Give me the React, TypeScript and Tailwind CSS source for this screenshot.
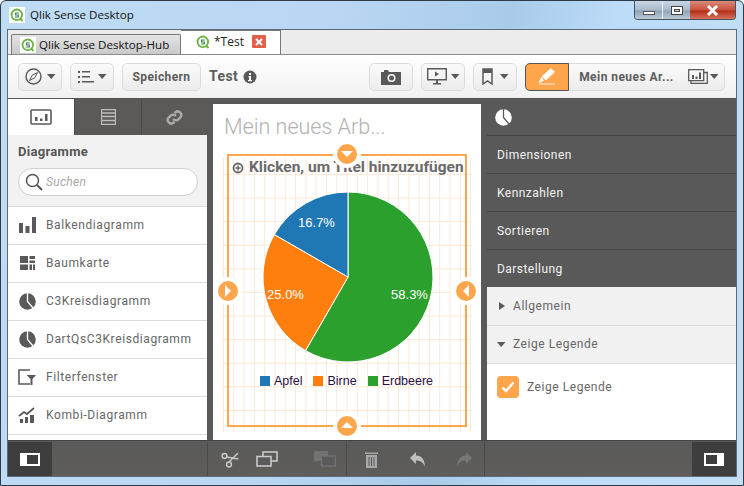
import React from "react";

const UI = "font-['Roboto','Liberation_Sans',sans-serif]";
const G = "#595959";

function Caret({ c = "#595959" }: { c?: string }) {
  return <svg width="9" height="5" viewBox="0 0 9 5"><path d="M0 0h8.5L4.2 5z" fill={c} /></svg>;
}

function QLogo({ box }: { box?: boolean }) {
  return (
    <span className={`flex h-[16px] w-[16px] items-center justify-center ${box ? "bg-white" : ""}`}>
      <svg width="14" height="14" viewBox="0 0 14 14">
        <circle cx="6.8" cy="6.8" r="5.3" fill="none" stroke="#6cb33f" strokeWidth="1.8" />
        <path d="M10 10.5l2.5 2.5" stroke="#6cb33f" strokeWidth="1.8" />
        <path d="M8.8 5H5.6v2h2.7v2H4.9" fill="none" stroke="#3c7a4a" strokeWidth="1.1" />
      </svg>
    </span>
  );
}

function ToolBtn({ w, children, className = "" }: { w: string; children: React.ReactNode; className?: string }) {
  return (
    <div className={`flex h-[28px] items-center justify-center rounded-[5px] border border-[#dcdcdc] bg-[linear-gradient(#fafafa,#ececec)] ${w} ${className}`}>
      {children}
    </div>
  );
}

function PieIcon({ c = "#595959", bg = "#fff" }: { c?: string; bg?: string }) {
  return (
    <svg width="17" height="17" viewBox="0 0 17 17">
      <circle cx="8.500" cy="8.500" r="8.300" fill={c} />
      <path d="M8.500 0v8.500l5.500 6.500" fill="none" stroke={bg} strokeWidth="1.300" />
    </svg>
  );
}

const rows: [string, React.ReactNode][] = [
  ["Balkendiagramm", <svg key="a" width="17" height="16" viewBox="0 0 17 16"><path d="M0 6h4v10H0zM6.500 9h4v7h-4zM13 0h4v16h-4z" fill={G} /></svg>],
  ["Baumkarte", <svg key="b" width="15" height="14" viewBox="0 0 15 14"><path d="M0 0h8v7H0zM9.500 0H15v3H9.500zM9.500 4.500H15V7H9.500zM0 8.500h8V14H0zM9.500 8.500H12V14H9.500zM13 8.500h2V14h-2z" fill={G} /></svg>],
  ["C3Kreisdiagramm", <PieIcon key="c" />],
  ["DartQsC3Kreisdiagramm", <PieIcon key="d" />],
  ["Filterfenster", <svg key="e" width="18" height="16" viewBox="0 0 18 16"><path d="M12 1H1v14h11" fill="none" stroke={G} strokeWidth="1.600" /><path d="M8.500 6H18l-3.500 4v6h-2v-6z" fill={G} /></svg>],
  ["Kombi-Diagramm", <svg key="f" width="18" height="16" viewBox="0 0 18 16"><path d="M1 9l5-4 3 2 7-6" fill="none" stroke={G} strokeWidth="1.800" /><path d="M2 12h3v4H2zM7 10h3v6H7zM12 8h4v8h-4z" fill={G} /></svg>],
];

function LeftPanel() {
  return (
    <div className="flex w-[199px] flex-col bg-white">
      <div className="flex h-[36px] shrink-0 bg-[#5b5a59]">
        <div className="flex w-[66px] items-center justify-center bg-white">
          <svg width="22" height="16" viewBox="0 0 22 16"><rect x="1" y="1" width="20" height="14" rx="1" fill="none" stroke={G} strokeWidth="1.600" /><path d="M5 8h2.500v4H5zM10 9.500h2.500V12H10zM15 5h2.500v7H15z" fill={G} /></svg>
        </div>
        <div className="flex w-[67px] items-center justify-center border-l border-[#4a4a4a]">
          <svg width="15" height="16" viewBox="0 0 15 16"><path d="M.5 .5h14v15H.5zM.5 4h14M.5 7.500h14M.5 11.500h14" fill="none" stroke="#bdbdbd" strokeWidth="1.300" /></svg>
        </div>
        <div className="flex w-[66px] items-center justify-center border-l border-[#4a4a4a]">
          <svg width="17" height="17" viewBox="0 0 24 24" fill="none" stroke="#a9a9a9" strokeWidth="3.500"><path d="M10 14a5 5 0 0 0 7.500.5l3-3a5 5 0 0 0-7-7l-1.500 1.500" /><path d="M14 10a5 5 0 0 0-7.500-.5l-3 3a5 5 0 0 0 7 7l1.500-1.500" /></svg>
        </div>
      </div>
      <div className="h-[71px] shrink-0 bg-[#f2f2f2] px-[10px] pt-[9px]">
        <div className={`${UI} text-[13px] leading-[16px] font-bold tracking-[0.3px] text-[#555]`}>Diagramme</div>
        <div className="mt-[8px] flex h-[28px] w-[180px] items-center rounded-[14px] border border-[#cfcfcf] bg-white pl-[6px]">
          <svg width="18" height="18" viewBox="0 0 18 18" fill="none" stroke="#555" strokeWidth="1.500"><circle cx="7.500" cy="7.500" r="6" /><path d="M12 12l5 5" strokeWidth="2" /></svg>
          <span className={`${UI} ml-[3px] text-[12px] tracking-[0.3px] text-[#a8a8a8] italic`}>Suchen</span>
        </div>
      </div>
      <div className="flex-1 overflow-hidden">
        {rows.map(([label, icon]) => (
          <div key={label} className="flex h-[38px] items-center border-t border-[#dcdcdc] pb-[1px] pl-[10px]">
            <span className="flex w-[18px] justify-center">{icon}</span>
            <span className={`${UI} ml-[10px] text-[12px] tracking-[0.6px] text-[#666]`}>{label}</span>
          </div>
        ))}
        <div className="border-t border-[#dcdcdc]" />
      </div>
    </div>
  );
}

function slice(a0: number, a1: number) {
  const r = 85, cx = 85, cy = 85;
  const p = (a: number) => [cx + r * Math.sin((a * Math.PI) / 180), cy - r * Math.cos((a * Math.PI) / 180)];
  const [x0, y0] = p(a0);
  const [x1, y1] = p(a1);
  return `M${cx} ${cy}L${x0} ${y0}A${r} ${r} 0 ${a1 - a0 > 180 ? 1 : 0} 1 ${x1} ${y1}Z`;
}

function Handle({ dir, className }: { dir: "up" | "down" | "left" | "right"; className: string }) {
  const d = { up: "M1 9h12L7 3z", down: "M1 4h12L7 10z", right: "M4 1v12l6-6z", left: "M10 1v12L4 7z" }[dir];
  return (
    <div className={`absolute flex h-[28px] w-[28px] items-center justify-center rounded-full bg-white ${className}`}>
      <div className="flex h-[20px] w-[20px] items-center justify-center rounded-full bg-[#ffa64d]">
        <svg width="14" height="14" viewBox="0 0 14 14"><path d={d} fill="#fff" /></svg>
      </div>
    </div>
  );
}

function Legend({ c, t }: { c: string; t: string }) {
  return (
    <div className="flex items-center gap-[4px]">
      <span className={`h-[10px] w-[10px] ${c}`} />
      <span className="font-['Liberation_Sans',sans-serif] text-[12.500px] leading-[14px] text-[#2a1040]">{t}</span>
    </div>
  );
}

function Canvas() {
  const lbl = "font-['Liberation_Sans',sans-serif] text-[13px]";
  return (
    <div className="mt-[5px] w-[268px] bg-white pl-[11px] pt-[7px]">
      <div className={`${UI} text-[21.500px] leading-[32px] font-light text-[#b2b2b2]`}>Mein neues Arb...</div>
      <div className="relative mt-[11px] ml-[3px] h-[273px] w-[240px]">
        <div className="absolute top-[4px] -right-[5px] -bottom-[5px] -left-[5px] bg-[linear-gradient(to_right,#fde8d5_1px,transparent_1px),linear-gradient(to_bottom,#fde8d5_1px,transparent_1px)] bg-[size:10.3px_100%,100%_23.6px] bg-[position:1px_0,0_16px]" />
        <div className="absolute inset-0 border-[2px] border-[#ffa64d]" />
        <div className="relative flex h-full flex-col">
          <div className="flex h-[26px] items-center pl-[5px] pt-[1px]">
            <svg width="12" height="12" viewBox="0 0 12 12"><circle cx="6" cy="6" r="4.500" fill="none" stroke="#666" strokeWidth="1.800" /><path d="M3.500 6h5M6 3.500v5" stroke="#666" strokeWidth="1.500" /></svg>
            <span className={`${UI} ml-[5px] text-[15.500px] font-bold whitespace-nowrap text-[#6a6a6a]`}>Klicken, um Titel hinzuzufügen</span>
          </div>
          <svg width="170" height="170" viewBox="0 0 170 170" className="mt-[11.500px] ml-[35.500px]">
            <path d={slice(0, 210)} fill="#2ca02c" stroke="#fff" />
            <path d={slice(210, 300)} fill="#ff7f0e" stroke="#fff" />
            <path d={slice(300, 360)} fill="#1f77b4" stroke="#fff" />
            <text x="53.500" y="35" textAnchor="middle" fill="#fff" className={lbl}>16.7%</text>
            <text x="22.500" y="106.500" textAnchor="middle" fill="#fff" className={lbl}>25.0%</text>
            <text x="146.500" y="106.500" textAnchor="middle" fill="#fff" className={lbl}>58.3%</text>
          </svg>
          <div className="mt-[12.500px] flex justify-center gap-[11px] pr-[1px]">
            <Legend c="bg-[#1f77b4]" t="Apfel" />
            <Legend c="bg-[#ff7f0e]" t="Birne" />
            <Legend c="bg-[#2ca02c]" t="Erdbeere" />
          </div>
        </div>
        <Handle dir="down" className="-top-[14px] left-[106px]" />
        <Handle dir="up" className="-bottom-[13px] left-[106px]" />
        <Handle dir="right" className="top-[123px] -left-[13px]" />
        <Handle dir="left" className="top-[123px] -right-[13px]" />
      </div>
    </div>
  );
}

function Prop({ t }: { t: string }) {
  return (
    <div className={`${UI} flex h-[38px] items-center border-t border-[#454545] pl-[10px] text-[12px] tracking-[0.45px] text-[#f2f2f2]`}>{t}</div>
  );
}

function RightPanel() {
  return (
    <div className="ml-[6px] flex flex-1 flex-col bg-white">
      <div className="flex h-[36px] shrink-0 items-center bg-[#595959] pl-[8px]">
        <PieIcon c="#fff" bg="#595959" />
      </div>
      <div className="bg-[#595959]">
        <Prop t="Dimensionen" />
        <Prop t="Kennzahlen" />
        <Prop t="Sortieren" />
        <Prop t="Darstellung" />
      </div>
      <div className={`${UI} flex h-[38px] items-center bg-[#f1f1f1] pb-[1px] pl-[12px] text-[12px] tracking-[0.55px] text-[#666]`}>
        <svg width="6" height="8" viewBox="0 0 6 8"><path d="M0 0v8l6-4z" fill={G} /></svg>
        <span className="ml-[8px]">Allgemein</span>
      </div>
      <div className={`${UI} flex h-[38px] items-center border-t border-[#dcdcdc] bg-[#f1f1f1] pb-[1px] pl-[10px] text-[12px] tracking-[0.55px] text-[#666]`}>
        <Caret />
        <span className="ml-[7px]">Zeige Legende</span>
      </div>
      <div className={`${UI} flex flex-1 items-start border-t border-[#dcdcdc] pt-[12px] pl-[10px] text-[12px] tracking-[0.55px] text-[#666]`}>
        <span className="flex h-[22px] w-[22px] items-center justify-center rounded-[4px] bg-[#ffa64d]">
          <svg width="14" height="12" viewBox="0 0 14 12"><path d="M1.500 6.500l3.500 3.500 7.500-8.500" fill="none" stroke="#fff" strokeWidth="2.400" /></svg>
        </span>
        <span className="ml-[8px] leading-[22px]">Zeige Legende</span>
      </div>
    </div>
  );
}

function BottomBar() {
  return (
    <div className="flex h-[36px] shrink-0 items-stretch border-t border-[#444] bg-[linear-gradient(#5a5a5a,#5e5d5a)] pt-[1px]">
      <div className="flex w-[44px] items-center justify-center bg-[#3e3e3e]">
        <div className="flex h-[13px] w-[20px] items-center justify-end bg-white pr-[2px]"><div className="h-[9px] w-[11px] bg-[#3e3e3e]" /></div>
      </div>
      <div className="w-[156px] border-r border-[#4a4a4a]" />
      <div className="flex w-[139px] items-center border-r border-[#4a4a4a]">
        <span className="ml-[13px]">
          <svg width="18" height="17" viewBox="0 0 18 17" fill="none" stroke="#c8c8c8" strokeWidth="1.500"><circle cx="3.500" cy="5" r="2.400" /><circle cx="8" cy="13.500" r="2.400" /><path d="M5.500 6l12 2M8 11l9-9" /></svg>
        </span>
        <span className="ml-[17px]">
          <svg width="22" height="16" viewBox="0 0 22 16" fill="none" stroke="#c8c8c8" strokeWidth="1.600"><rect x="7" y="1" width="14" height="9" /><rect x="1" y="5.500" width="14" height="9.500" fill="#5a5a5a" /></svg>
        </span>
        <span className="ml-[36px]">
          <svg width="22" height="16" viewBox="0 0 22 16"><rect x="0" y="0" width="14" height="10" fill="#727272" /><rect x="7.500" y="5" width="14" height="10" fill="#5a5a5a" stroke="#727272" strokeWidth="1.500" /></svg>
        </span>
      </div>
      <div className="flex w-[138px] items-center border-r border-[#4a4a4a]">
        <span className="ml-[18px]">
          <svg width="13" height="17" viewBox="0 0 13 17"><path d="M0 1.500h13V3H0zM1 4h11v13H1z" fill="#a8a8a8" /><path d="M4 6v9M6.500 6v9M9 6v9" stroke="#5a5a5a" /></svg>
        </span>
        <span className="ml-[32px]">
          <svg width="15" height="15" viewBox="0 0 15 15"><path d="M0 6l6-6v3.500c6 0 8.500 4 9 11-2-4-4-6-9-6V12z" fill="#c0c0c0" /></svg>
        </span>
        <span className="ml-[32px]">
          <svg width="15" height="15" viewBox="0 0 15 15"><path d="M15 6L9 0v3.500c-6 0-8.500 4-9 11 2-4 4-6 9-6V12z" fill="#777" /></svg>
        </span>
      </div>
      <div className="flex-1" />
      <div className="flex w-[44px] items-center justify-center bg-[#3e3e3e]">
        <div className="flex h-[13px] w-[20px] items-center bg-white pl-[2px]"><div className="h-[9px] w-[11px] bg-[#3e3e3e]" /></div>
      </div>
    </div>
  );
}

export default function App() {
  return (
    <div className="flex h-[486px] w-[744px] flex-col overflow-hidden rounded-t-[6px] border border-[#2f3b47] bg-[linear-gradient(100deg,#bfdcf5_0%,#b9d7f3_40%,#a9cbe9_62%,#bcdcf8_75%,#c4def5_100%)] font-['Noto_Sans',sans-serif]">
      <div className="relative flex h-[28px] shrink-0 items-center pl-[8px]">
        <QLogo box />
        <span className="ml-[5px] font-['Open_Sans',sans-serif] text-[11.600px] text-[#111]">Qlik Sense Desktop</span>
        <div className="absolute top-0 right-[7px] flex h-[19px] overflow-hidden rounded-b-[4px] border border-t-0 border-[#46545f]">
          <div className="flex w-[28px] items-center justify-center border-r border-[#e8f0f8] bg-[linear-gradient(#c9d6e4,#a9bacb_50%,#8fa3b6_55%,#bccad8)]">
            <div className="mt-[6px] h-[4px] w-[12px] border border-[#555] bg-white" />
          </div>
          <div className="flex w-[27px] items-center justify-center bg-[linear-gradient(#c9d6e4,#a9bacb_50%,#8fa3b6_55%,#bccad8)]">
            <div className="flex h-[9px] w-[12px] items-center justify-center border border-[#444] bg-white"><div className="h-[3px] w-[6px] border border-[#444] bg-[#c9d6e4]" /></div>
          </div>
          <div className="flex w-[45px] items-center justify-center bg-[linear-gradient(#d98a7a,#c9503a_50%,#b42f18_55%,#d5715a)]">
            <svg width="13" height="11" viewBox="0 0 13 11"><path d="M2 1l9 9M11 1l-9 9" stroke="#fff" strokeWidth="3" /></svg>
          </div>
        </div>
      </div>
      <div className="mx-[6px] mb-[8px] flex min-h-0 flex-1 flex-col border border-[#5d6b78]">
        <div className="flex h-[24px] shrink-0 items-end bg-[#ececec] pl-[3px]">
          <div className="flex h-[20px] w-[170px] items-center rounded-t-[2px] border border-b-0 border-[#777] bg-[linear-gradient(#e4e4e4,#c9c9c9)] pl-[8px]">
            <QLogo box />
            <span className="ml-[3px] font-['Open_Sans',sans-serif] text-[11.600px] whitespace-nowrap text-[#111]">Qlik Sense Desktop-Hub</span>
          </div>
          <div className="flex h-[24px] w-[100px] items-center border-t border-r border-[#777] bg-white pb-[2px] pl-[14px]">
            <QLogo />
            <span className="ml-[3px] font-['Open_Sans',sans-serif] text-[12px] text-[#222]">*Test</span>
            <span className="ml-[8px] flex h-[13px] w-[14px] items-center justify-center rounded-[1px] bg-[#e0604a]">
              <svg width="8" height="8" viewBox="0 0 8 8"><path d="M1 1l6 6M7 1L1 7" stroke="#fff" strokeWidth="2" /></svg>
            </span>
          </div>
        </div>
        <div className="flex h-[44px] shrink-0 items-center border-t border-[#8a8a8a] bg-[linear-gradient(#fff,#f1f1f1)] pl-[10px]">
          <ToolBtn w="w-[44px]" className="gap-[5px]">
            <svg width="17" height="17" viewBox="0 0 17 17"><circle cx="8.500" cy="8.500" r="7.500" fill="none" stroke={G} strokeWidth="1.400" /><path d="M12.500 4.500L9.800 9.800 4.500 12.500 7.200 7.200z" fill="none" stroke={G} /></svg>
            <Caret />
          </ToolBtn>
          <ToolBtn w="w-[44px]" className="ml-[8px] gap-[4px]">
            <svg width="17" height="14" viewBox="0 0 17 14"><path d="M1 1h2v2H1zM1 6h2v2H1zM1 11h2v2H1zM5 1h8v1.600H5zM5 6h8v1.600H5zM5 11h12v1.600H5z" fill={G} /></svg>
            <Caret />
          </ToolBtn>
          <ToolBtn w="w-[79px]" className="ml-[8px]">
            <span className={`${UI} text-[12px] font-bold tracking-[0.4px] text-[#5c5c5c]`}>Speichern</span>
          </ToolBtn>
          <span className={`${UI} ml-[8px] text-[14px] font-bold tracking-[0.4px] text-[#5c5c5c]`}>Test</span>
          <svg width="14" height="14" viewBox="0 0 14 14" className="ml-[5px]"><circle cx="7" cy="7" r="6.500" fill={G} /><path d="M6 3h2v2H6zM5.500 6H8v4h1v1.200H5V10h1V7.200h-.5z" fill="#fff" /></svg>
          <ToolBtn w="w-[44px]" className="ml-[112px]">
            <svg width="20" height="16" viewBox="0 0 20 16"><path d="M0 3h3V1h4l1 2h12v13H0z" fill={G} /><circle cx="10.500" cy="9" r="4" fill="#fff" /><circle cx="10.500" cy="9" r="2.500" fill={G} /></svg>
          </ToolBtn>
          <ToolBtn w="w-[44px]" className="ml-[8px] gap-[4px]">
            <svg width="20" height="17" viewBox="0 0 20 17"><path d="M.7 .7h18.600v11H.7z" fill="none" stroke={G} strokeWidth="1.400" /><path d="M8 3.500v5l4-2.500zM9 12h2v3h3v1.500H6V15h3z" fill={G} /></svg>
            <Caret />
          </ToolBtn>
          <ToolBtn w="w-[44px]" className="ml-[8px] gap-[7px]">
            <svg width="11" height="17" viewBox="0 0 11 17"><path d="M1 1h9v15l-4.500-3L1 16z" fill="none" stroke={G} strokeWidth="1.500" /><path d="M1 1h9v4H1z" fill={G} /></svg>
            <Caret />
          </ToolBtn>
          <div className="ml-[8px] flex h-[28px] w-[200px] items-center rounded-[5px] border border-[#dcdcdc] bg-[linear-gradient(#fafafa,#ececec)]">
            <div className="-ml-px flex h-[28px] w-[44px] items-center justify-center rounded-l-[5px] border border-[#555] bg-[#ffa64d]">
              <svg width="18" height="17" viewBox="0 0 18 17"><path d="M13 .5l3.500 3.500-8.500 8-4-3.500zM3.500 9.500l-2.500 5 4.500-2zM1 16h16" fill="#fff" stroke="#fff" strokeWidth=".8" /></svg>
            </div>
            <span className={`${UI} ml-[10px] text-[12px] font-bold tracking-[0.45px] whitespace-nowrap text-[#5c5c5c]`}>Mein neues Ar...</span>
            <span className="ml-[14px] flex items-center gap-[2px]">
              <svg width="20" height="15" viewBox="0 0 20 15"><path d="M.7 .7h15v11H.7zM16 3.500h3.300v11H3v-3" fill="none" stroke={G} strokeWidth="1.300" /><path d="M4 6h2v4H4zM7.500 7.500h2V10h-2zM11 3.500h2V10h-2z" fill={G} /></svg>
              <Caret />
            </span>
          </div>
        </div>
        <div className="flex min-h-0 flex-1 items-stretch border-t border-[#555] bg-[#595959]">
          <LeftPanel />
          <div className="w-[6px] shrink-0" />
          <Canvas />
          <RightPanel />
        </div>
        <BottomBar />
      </div>
    </div>
  );
}
